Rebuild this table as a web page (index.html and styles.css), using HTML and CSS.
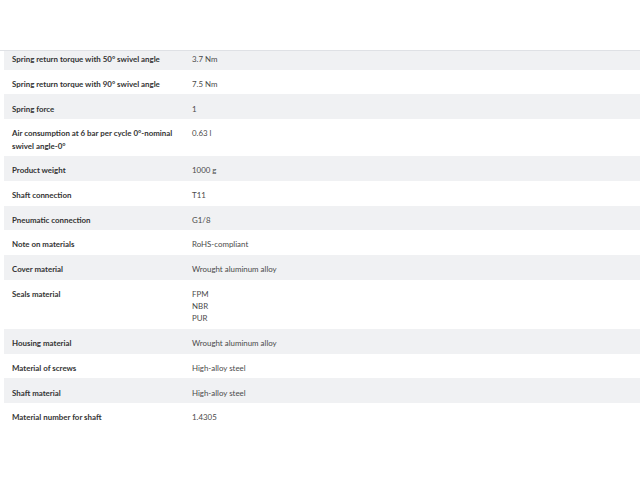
FILE: index.html
```html
<!DOCTYPE html>
<html lang="en">
<head>
	<meta charset="utf-8">
	<title>Technical data</title>
	<link rel="stylesheet" href="styles.css">
</head>
<body>
<div class="top"></div>
<div class="scroller">
	<table class="specs">
		<tr><td class="label">Spring return torque with 50° swivel angle</td><td class="value">3.7 Nm</td></tr>
		<tr><td class="label">Spring return torque with 90° swivel angle</td><td class="value">7.5 Nm</td></tr>
		<tr><td class="label">Spring force</td><td class="value">1</td></tr>
		<tr><td class="label">Air consumption at 6 bar per cycle 0°-nominal swivel angle-0°</td><td class="value">0.63 l</td></tr>
		<tr><td class="label">Product weight</td><td class="value">1000 g</td></tr>
		<tr><td class="label">Shaft connection</td><td class="value">T11</td></tr>
		<tr><td class="label">Pneumatic connection</td><td class="value">G1/8</td></tr>
		<tr><td class="label">Note on materials</td><td class="value">RoHS-compliant</td></tr>
		<tr><td class="label">Cover material</td><td class="value">Wrought aluminum alloy</td></tr>
		<tr><td class="label">Seals material</td><td class="value">FPM<br>NBR<br>PUR</td></tr>
		<tr><td class="label">Housing material</td><td class="value">Wrought aluminum alloy</td></tr>
		<tr><td class="label">Material of screws</td><td class="value">High-alloy steel</td></tr>
		<tr><td class="label">Shaft material</td><td class="value">High-alloy steel</td></tr>
		<tr><td class="label">Material number for shaft</td><td class="value">1.4305</td></tr>
	</table>
</div>
</body>
</html>
```

FILE: styles.css
```css
html { background-color: white; }
body {
	margin: 0;
	overflow: hidden;
	font-family: Lato, "Open Sans", sans-serif;
	font-size: 7.9px;
	color: #333;
}
.top {
	height: 50px;
	border-bottom: solid 1px #dfe1e5;
}
.scroller {
	overflow: hidden;
	padding-left: 4px;
}
.specs {
	width: 100%;
	margin-top: -6px;
	border-collapse: collapse;
}
.specs tr:nth-child(odd) { background-color: #f0f1f3; }
.specs td {
	padding: 8.1px 8px 4.45px;
	line-height: 12.2px;
	vertical-align: top;
}
.label {
	width: 164px;
	font-weight: bold;
	color: #333;
}
.value { color: #4a4a4a; }
```
